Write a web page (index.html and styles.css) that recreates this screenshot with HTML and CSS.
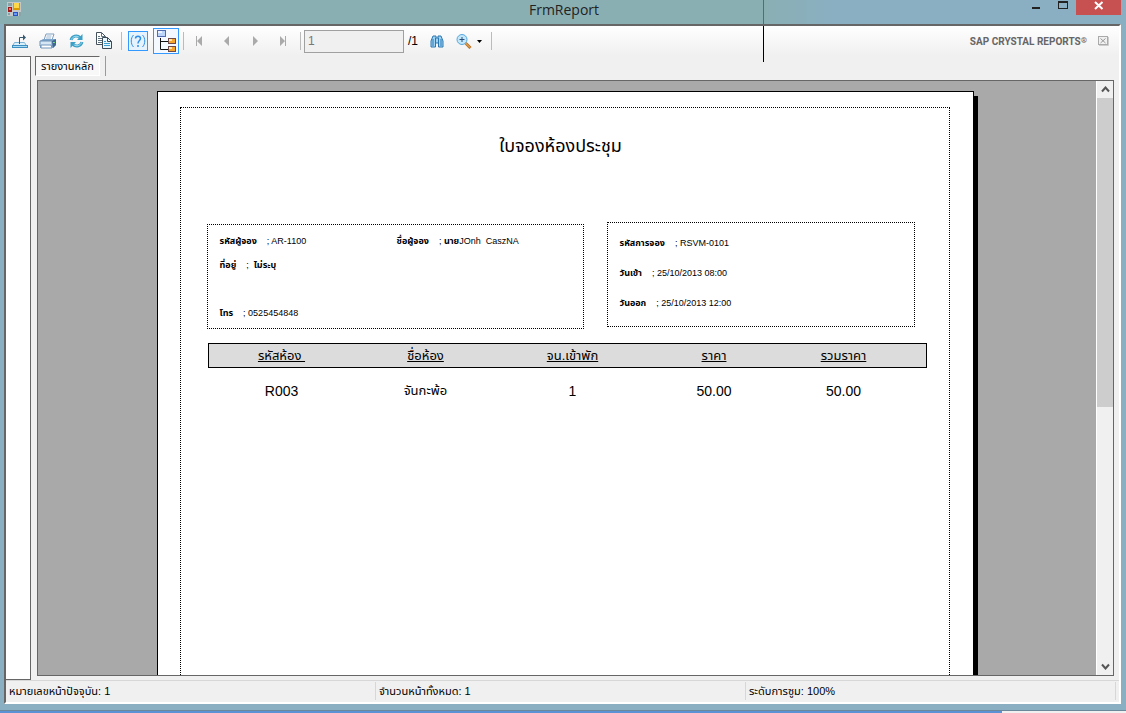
FILE: index.html
```html
<!DOCTYPE html>
<html lang="th">
<head>
    <meta charset="UTF-8">
    <meta name="viewport" content="width=device-width, initial-scale=1.0">
    <title>FrmReport</title>
    <link rel="stylesheet" href="styles.css">
</head>
<body>
    <header class="titlebar">
        <svg class="app-icon" width="14" height="14" viewBox="0 0 14 14">
            <rect width="14" height="14" fill="#c4c8c8"/>
            <path d="M1 1h4v3H1zM1 11h2v2H1zM12 10h2v4h-2z" fill="#89a4a8"/>
            <rect x="1" y="5" width="4" height="5" fill="#a01818"/>
            <rect x="2" y="6" width="2" height="2" fill="#ff6a5a"/>
            <rect x="6" y="1" width="7" height="7" fill="#d99a00"/>
            <rect x="7" y="1" width="5" height="5" fill="#ffd84a"/>
            <rect x="6" y="10" width="5" height="4" fill="#2452c8"/>
            <rect x="7" y="11" width="3" height="2" fill="#6b9bf5"/>
        </svg>
        <h1 class="title">FrmReport</h1>
        <div class="window-buttons">
            <button class="win-btn" aria-label="Minimize">
                <svg width="10" height="10" viewBox="0 0 10 10"><path d="M1 6h8v2H1z" fill="#222"/></svg>
            </button>
            <button class="win-btn" aria-label="Maximize">
                <svg width="10" height="10" viewBox="0 0 10 10"><path d="M0 0h10v8H0zM1 2v5h8V2z" fill="#222" fill-rule="evenodd"/></svg>
            </button>
            <button class="win-btn close" aria-label="Close">
                <svg width="10" height="10" viewBox="0 0 10 10"><path d="M1 1l7.500 7M8.500 1L1 8" stroke="#fff" stroke-width="2"/></svg>
            </button>
        </div>
    </header>

    <main class="window">
        <div class="toolbar">
            <button class="tool" aria-label="Export">
                <svg width="18" height="16" viewBox="0 0 18 16">
                    <path d="M3.500 9.500h10l2 3.500h-14z" fill="#d9f0fb" stroke="#7fb4d4"/>
                    <path d="M1 12h16v3H1z" fill="#3c8fc0"/>
                    <path d="M2 13h14v1H2z" fill="#a8dcf4"/>
                    <path d="M8.500 11V4.500h4" fill="none" stroke="#3a5a72"/>
                    <path d="M12 1.500l3 3-3 3z" fill="#3a5a72"/>
                </svg>
            </button>
            <button class="tool" aria-label="Print">
                <svg width="18" height="16" viewBox="0 0 18 16">
                    <path d="M5 7l2-6h8l-2 6z" fill="#fff" stroke="#7f9fc0"/>
                    <path d="M7.500 3h5M7 5h5" stroke="#9db8d4"/>
                    <path d="M1 8l3-2h12l1 1v5l-3 3H1z" fill="#7fa6cc"/>
                    <path d="M1 8h12v5H1z" fill="#d6e6f4" stroke="#6b8fb4"/>
                    <path d="M13 8l4-2v6l-3 3z" fill="#3f678f"/>
                    <path d="M2 12h10l1 3H2z" fill="#fff" stroke="#6f95ba"/>
                    <rect x="14" y="9" width="2" height="1" fill="#6ddc7a"/>
                </svg>
            </button>
            <button class="tool" aria-label="Refresh">
                <svg width="15" height="14" viewBox="0 0 15 14">
                    <path d="M2 6c1-4 6-5.500 9-2.500" fill="none" stroke="#3c9fc6" stroke-width="3"/>
                    <path d="M2.500 5.500c1-3 5-4.500 8-2" fill="none" stroke="#a5e3f4"/>
                    <path d="M13.500 0v6H8z" fill="#3c9fc6"/>
                    <path d="M13 8c-1 4-6 5.500-9 2.500" fill="none" stroke="#3c9fc6" stroke-width="3"/>
                    <path d="M12.500 8.500c-1 3-5 4.500-8 2" fill="none" stroke="#a5e3f4"/>
                    <path d="M1.500 14V8H7z" fill="#3c9fc6"/>
                </svg>
            </button>
            <button class="tool" aria-label="Copy">
                <svg width="18" height="18" viewBox="0 0 18 18">
                    <path d="M1.500.5h5l4 4v8h-9z" fill="#fff" stroke="#45515c"/>
                    <path d="M6.500.5v4h4M3 4.500h2M3 6.500h4M3 8.500h4M3 10.500h4" fill="none" stroke="#5f7280"/>
                    <path d="M7.500 5.500h5l4 4v7h-9z" fill="#e8f7fe" stroke="#3e4b56"/>
                    <path d="M12.500 5.500v4h4" fill="none" stroke="#3e4b56"/>
                    <path d="M9 9.500h2M9 11.500h6M9 13.500h6" stroke="#3b9fd0"/>
                </svg>
            </button>
            <span class="separator"></span>
            <button class="tool help" aria-label="Help">
                <svg width="16" height="14" viewBox="0 0 16 14" fill="none" stroke="#2f8fe8">
                    <path d="M3.500 1C.5 4 .5 10 3.500 13M12.500 1c3 3 3 9 0 12"/>
                    <path d="M5.500 4.500c0-3 5-3 5 0 0 2-2.500 2-2.500 5M8 11v2" stroke-width="1.500"/>
                </svg>
            </button>
            <button class="tool tree-toggle" aria-label="Group tree">
                <svg width="20" height="22" viewBox="0 0 20 22">
                    <path d="M4.500 8v11.500H12M4.500 11.500H12" fill="none" stroke="#111"/>
                    <rect x="1.500" y=".5" width="8" height="6" fill="#bcd5fb" stroke="#536bb0"/>
                    <path d="M2 1h4v2H2z" fill="#edf4ff"/>
                    <rect x="12.500" y="8.500" width="7" height="5" fill="#f5a52c" stroke="#6d4a4a"/>
                    <path d="M13 9h3v2h-3z" fill="#ffe6a8"/>
                    <rect x="12.500" y="16.500" width="7" height="5" fill="#f5a52c" stroke="#6d4a4a"/>
                    <path d="M13 17h3v2h-3z" fill="#ffe6a8"/>
                </svg>
            </button>
            <span class="separator after-toggle"></span>
            <button class="tool nav-btn" aria-label="First page">
                <svg width="8" height="10" viewBox="0 0 8 10"><path d="M1 0h1v10H1zM7 0v10L2 5z" fill="#aaa"/></svg>
            </button>
            <button class="tool nav-btn" aria-label="Previous page">
                <svg width="8" height="10" viewBox="0 0 8 10"><path d="M6 0v10L1 5z" fill="#aaa"/></svg>
            </button>
            <button class="tool nav-btn" aria-label="Next page">
                <svg width="8" height="10" viewBox="0 0 8 10"><path d="M2 0v10l5-5z" fill="#aaa"/></svg>
            </button>
            <button class="tool nav-btn" aria-label="Last page">
                <svg width="8" height="10" viewBox="0 0 8 10"><path d="M1 0v10l5-5zM6 0h1v10H6z" fill="#aaa"/></svg>
            </button>
            <span class="separator before-input"></span>
            <input class="page-input" type="text" value="1" aria-label="Page number" disabled>
            <span class="page-total">/1</span>
            <button class="tool find" aria-label="Find">
                <svg width="14" height="13" viewBox="0 0 14 13">
                    <path d="M3 1h3v2h2V1h3l2 5v6H8.500V8h-3v4H1V6z" fill="#9fd4f4" stroke="#2a76b2"/>
                    <path d="M3 4v7M11 4v7M5.500 3v5M8.500 3v5" stroke="#2a76b2"/>
                </svg>
            </button>
            <button class="tool zoom" aria-label="Zoom">
                <svg width="16" height="15" viewBox="0 0 16 15">
                    <path d="M9.500 9l5 5" stroke="#b8742c" stroke-width="3"/>
                    <path d="M9.500 9l4.500 4.500" stroke="#f5b660"/>
                    <circle cx="6" cy="5.500" r="5" fill="#c4e8fb" stroke="#55a8dc"/>
                    <path d="M6 3v5M3.500 5.500h5" stroke="#2a4f7c"/>
                </svg>
                <svg width="5" height="3" viewBox="0 0 5 3"><path d="M0 0h5L2.500 3z" fill="#000"/></svg>
            </button>
            <span class="separator"></span>
            <span class="brand">SAP CRYSTAL REPORTS<span class="mark">®</span></span>
            <button class="tool close-view" aria-label="Close view">
                <svg width="11" height="10" viewBox="0 0 11 10"><rect x=".5" y=".5" width="9" height="8" fill="#f0f0f0" stroke="#aaa"/><path d="M2.500 2.500l5 4.500M7.500 2.500l-5 4.500" stroke="#999"/><path d="M10.500 1v8.500H1" fill="none" stroke="#ccc"/></svg>
            </button>
        </div>

        <div class="workspace">
            <aside class="group-tree"></aside>
            <section class="report">
                <div class="tabs">
                    <button class="tab">รายงานหลัก</button>
                </div>
                <div class="viewer">
                    <div class="canvas">
                        <article class="page">
                            <div class="page-body">
                                <h2 class="report-title">ใบจองห้องประชุม</h2>
                                <div class="info">
                                    <div class="box customer">
                                        <p class="pair"><b>รหัสผู้จอง</b><span>; AR-1100</span></p>
                                        <p class="pair"><b>ชื่อผู้จอง</b><span>; <b>นาย</b>JOnh&nbsp; CaszNA</span></p>
                                        <p class="pair wide"><b>ที่อยู่</b><span>; &nbsp;<b>ไม่ระบุ</b></span></p>
                                        <p class="pair wide phone"><b>โทร</b><span>; 0525454848</span></p>
                                    </div>
                                    <div class="box booking">
                                        <p class="pair"><b>รหัสการจอง</b><span>; RSVM-0101</span></p>
                                        <p class="pair"><b>วันเข้า</b><span>; 25/10/2013 08:00</span></p>
                                        <p class="pair"><b>วันออก</b><span>; 25/10/2013 12:00</span></p>
                                    </div>
                                </div>
                                <table class="rooms">
                                    <colgroup>
                                        <col class="col-code">
                                        <col class="col-name">
                                        <col class="col-guests">
                                        <col class="col-price">
                                        <col class="col-total">
                                    </colgroup>
                                    <thead>
                                        <tr><th>รหัสห้อง&nbsp;</th><th>ชื่อห้อง</th><th>จน.เข้าพัก</th><th>ราคา</th><th>รวมราคา</th></tr>
                                    </thead>
                                    <tbody>
                                        <tr><td>R003</td><td class="thai">จันกะพ้อ</td><td>1</td><td>50.00</td><td>50.00</td></tr>
                                    </tbody>
                                </table>
                            </div>
                        </article>
                    </div>
                    <div class="scrollbar">
                        <button class="arrow" aria-label="Scroll up"><svg width="9" height="7" viewBox="0 0 9 7"><path d="M1 5.500l3.500-4 3.500 4" fill="none" stroke="#555" stroke-width="2"/></svg></button>
                        <div class="thumb"></div>
                        <button class="arrow" aria-label="Scroll down"><svg width="9" height="7" viewBox="0 0 9 7"><path d="M1 1.500l3.500 4 3.500-4" fill="none" stroke="#555" stroke-width="2"/></svg></button>
                    </div>
                </div>
            </section>
        </div>

        <footer class="statusbar">
            <span class="status">หมายเลขหน้าปัจจุบัน: 1</span>
            <span class="status">จำนวนหน้าทั้งหมด: 1</span>
            <span class="status">ระดับการซูม: 100%</span>
        </footer>
    </main>
    <div class="desktop-edge"></div>
    <div class="marker"></div>
</body>
</html>
```
FILE: styles.css
```css
* {
    margin: 0;
    padding: 0;
    box-sizing: border-box;
}

body {
    height: 100vh;
    display: flex;
    flex-direction: column;
    overflow: hidden;
    position: relative;
    background: #8aafc2;
    font-family: "Liberation Sans", "Noto Sans Thai", sans-serif;
    font-size: 12px;
    color: #000;
}

button {
    border: none;
    background: none;
    font: inherit;
    color: inherit;
}

svg {
    display: block;
    flex: none;
}

/* Title bar */
.titlebar {
    height: 24px;
    flex: none;
    display: grid;
    grid-template-columns: 1fr auto 1fr;
    padding: 0 5px 0 7px;
    background: linear-gradient(90deg, #8aafb3 68%, #8aafc2 74%);
}

.app-icon {
    margin-top: 2px;
}

.title {
    font-family: "Open Sans", sans-serif;
    font-size: 14px;
    line-height: 19px;
    font-weight: normal;
    color: #222;
}

.window-buttons {
    display: flex;
    justify-content: flex-end;
}

.win-btn {
    width: 27px;
    height: 15px;
    display: flex;
    justify-content: center;
    padding-top: 1px;
}

.win-btn.close {
    width: 45px;
    background: #c75050;
}

/* Window */
.window {
    flex: 1;
    min-height: 0;
    display: flex;
    flex-direction: column;
    margin: 0 5px 0 4px;
    background: #f0f0f0;
    border: 2px solid #666;
    border-right-color: #fff;
    border-bottom-color: #fff;
}

.toolbar {
    height: 30px;
    flex: none;
    display: flex;
    align-items: center;
    padding: 0 6px 0 0;
    background: linear-gradient(#fff, #f0f0f0);
}

.tool {
    width: 28px;
    height: 26px;
    display: flex;
    align-items: center;
    justify-content: center;
}

.separator {
    width: 1px;
    height: 18px;
    background: #bbb;
    margin: 0 3px;
}

.after-toggle {
    margin: 0 1px 0 4px;
}

.before-input {
    margin-right: 2px;
}

.help {
    width: 20px;
    height: 20px;
    margin: 0 5px 0 3px;
    border: 1px solid #3399ff;
    background: #e6f2fc;
}

.tree-toggle {
    width: 26px;
    border: 1px solid #3399ff;
    background: #f4f9ff;
}

.page-input {
    width: 100px;
    height: 23px;
    padding: 0 3px;
    margin-left: 1px;
    border: 1px solid #a0a0a0;
    background: #f0f0f0;
    font: inherit;
    color: #777;
}

.page-total {
    width: 19px;
    padding-left: 4px;
}

.zoom {
    width: 34px;
    gap: 5px;
    margin: 0 2px 0 1px;
}

.brand {
    display: flex;
    margin-left: auto;
    font-family: Roboto, sans-serif;
    font-size: 10px;
    font-weight: bold;
    color: #666;
}

.mark {
    font-size: 8px;
}

.close-view {
    width: 20px;
    margin-left: 6px;
}

/* Report area */
.workspace {
    flex: 1;
    min-height: 0;
    display: flex;
    gap: 6px;
    padding: 0 5px 4px 0;
}

.group-tree {
    width: 25px;
    flex: none;
    background: #fff;
    border: 1px solid #666;
    border-left: none;
    margin-bottom: -4px;
}

.report {
    flex: 1;
    min-width: 0;
    display: flex;
    flex-direction: column;
}

.tabs {
    height: 24px;
    flex: none;
    margin-left: -2px;
}

.tab {
    height: 20px;
    padding: 0 5px;
    background: #f8f8f8;
    border: 1px solid #666;
    border-right-color: #fff;
    border-bottom-color: #fff;
    box-shadow: 5px 0 0 #f0f0f0, 6px 0 0 #999;
    font-size: 11px;
}

.viewer {
    flex: 1;
    min-height: 0;
    display: flex;
    background: #a9a9a9;
    border: 1px solid #666;
}

.canvas {
    flex: 1;
    display: flex;
    justify-content: center;
    overflow: hidden;
    padding: 10px 4px 0 0;
}

.page {
    width: 817px;
    flex: none;
    min-height: 900px;
    padding: 15px 23px 15px 22px;
    background: #fff;
    border: 1px solid #000;
    box-shadow: 4px 5px 0 #000;
}

.page-body {
    height: 100%;
    padding: 20px 22px 0 26px;
    border: 1px dotted #000;
}

.report-title {
    height: 94px;
    padding-right: 12px;
    line-height: 36px;
    text-align: center;
    font-size: 18px;
    font-weight: normal;
}

.info {
    display: grid;
    grid-template-columns: 377px 308px;
    gap: 23px;
    height: 107px;
}

.box {
    height: 105px;
    border: 1px dotted #000;
    font-size: 9px;
}

.customer {
    align-self: end;
    display: grid;
    grid-template-columns: 177px 1fr;
    grid-template-rows: repeat(4, 24px);
    padding: 4px 0 0 12px;
}

.booking {
    padding: 5px 0 0 12px;
}

.pair {
    display: flex;
    align-items: center;
    gap: 10px;
    line-height: 24px;
    white-space: nowrap;
}

.wide {
    grid-column: 1 / 3;
}

.phone {
    grid-row: 4;
}

.booking .pair {
    line-height: 30px;
}

/* Room table */
.rooms {
    width: 719px;
    margin: 14px 0 0 1px;
    table-layout: fixed;
    border-collapse: collapse;
    font-size: 14px;
    line-height: 18px;
    text-align: center;
}

.col-code,
.col-total {
    width: 148px;
}

.col-name {
    width: 140px;
}

.col-guests {
    width: 154px;
}

.col-price {
    width: 129px;
}

.rooms thead {
    background: #dcdcdc;
    outline: 1px solid #000;
    outline-offset: -1px;
}

.rooms th {
    height: 25px;
    font-size: 13px;
    font-weight: normal;
    text-decoration: underline;
}

.rooms td {
    padding-top: 14px;
}

.rooms .thai {
    font-size: 13px;
}

.rooms th:last-child,
.rooms td:last-child {
    padding-right: 18px;
}

/* Scrollbar */
.scrollbar {
    width: 17px;
    flex: none;
    display: flex;
    flex-direction: column;
    background: #f0f0f0;
    border-left: 1px solid #fff;
}

.arrow {
    height: 17px;
    display: flex;
    align-items: center;
    justify-content: center;
}

.thumb {
    height: 309px;
    background: #cdcdcd;
    margin-bottom: auto;
}

/* Status bar */
.statusbar {
    height: 22px;
    flex: none;
    display: grid;
    grid-template-columns: repeat(3, 1fr);
    padding: 1px 3px 2px 0;
    border-top: 1px solid #d7d7d7;
    font-size: 11px;
}

.status {
    padding-left: 3px;
    line-height: 18px;
    border-right: 1px solid #d7d7d7;
}

/* Edge of the desktop below the window */
.desktop-edge {
    height: 3px;
    flex: none;
    margin-top: 6px;
    border-top: 1px solid #6a8899;
    background: linear-gradient(90deg, #5b92d6 89%, #f0f0f0 89%);
}

/* Line lying over the title bar and toolbar */
.marker {
    position: absolute;
    top: 0;
    left: 763px;
    width: 1px;
    height: 62px;
    background: linear-gradient(#666 26px, #000 26px);
}
```
